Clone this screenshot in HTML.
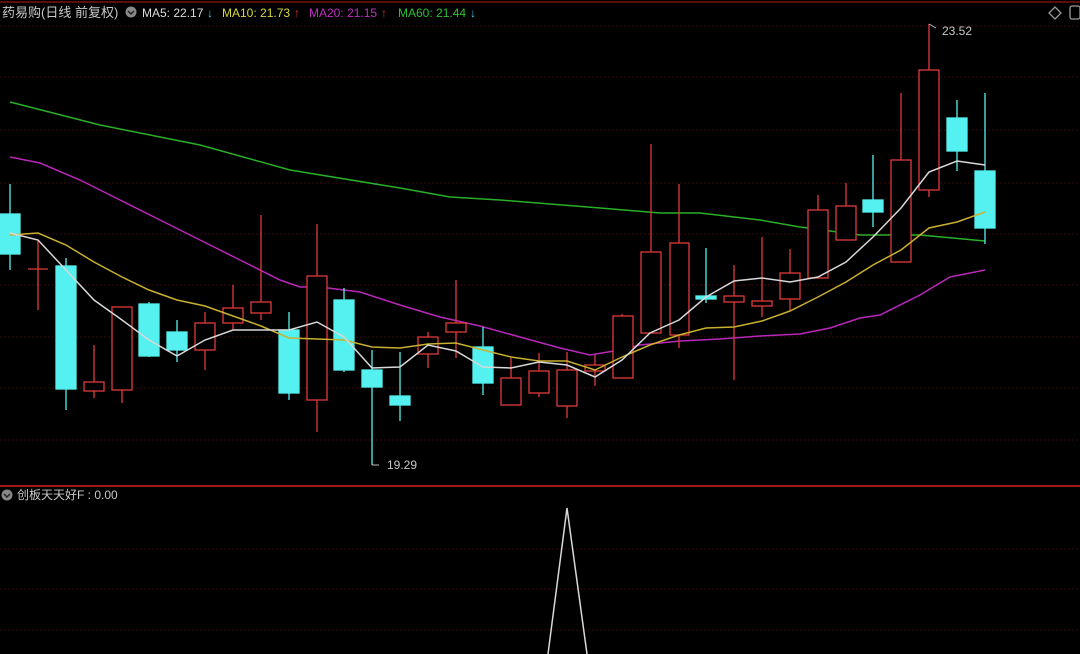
<!DOCTYPE html>
<html><head><meta charset="utf-8"><style>
html,body{margin:0;padding:0;background:#000;width:1080px;height:654px;overflow:hidden}
svg{display:block}
text{font-family:"Liberation Sans","Noto Sans CJK SC",sans-serif}
</style></head><body>
<svg width="1080" height="654" viewBox="0 0 1080 654" xmlns="http://www.w3.org/2000/svg">
<rect width="1080" height="654" fill="#000"/>
<line x1="0" y1="2" x2="1080" y2="2" stroke="#5a0d0d" stroke-width="2"/>
<g stroke="#3a0a0a" stroke-width="1" stroke-dasharray="2,2">
<line x1="0" y1="26" x2="1080" y2="26"/><line x1="0" y1="77" x2="1080" y2="77"/><line x1="0" y1="130" x2="1080" y2="130"/><line x1="0" y1="183" x2="1080" y2="183"/><line x1="0" y1="234" x2="1080" y2="234"/><line x1="0" y1="285" x2="1080" y2="285"/><line x1="0" y1="337" x2="1080" y2="337"/><line x1="0" y1="388" x2="1080" y2="388"/><line x1="0" y1="440" x2="1080" y2="440"/>
<line x1="0" y1="549" x2="1080" y2="549"/><line x1="0" y1="589" x2="1080" y2="589"/><line x1="0" y1="630" x2="1080" y2="630"/>
</g>
<line x1="0" y1="486" x2="1080" y2="486" stroke="#a01818" stroke-width="2"/>
<!-- header -->
<text x="2" y="17" font-size="13" fill="#c8c8c8">药易购(日线 前复权)</text>
<circle cx="131" cy="12" r="5.5" fill="#888"/><path d="M128 11l3 3 3-3" stroke="#222" stroke-width="1.5" fill="none"/>
<text x="142" y="17" font-size="12" fill="#dcdcdc">MA5: 22.17</text><text x="207" y="17" font-size="12" fill="#4ad0e0">↓</text>
<text x="222" y="17" font-size="12" fill="#d8d840">MA10: 21.73</text><text x="294" y="17" font-size="12" fill="#e03030">↑</text>
<text x="309" y="17" font-size="12" fill="#c030c0">MA20: 21.15</text><text x="381" y="17" font-size="12" fill="#e03030">↑</text>
<text x="398" y="17" font-size="12" fill="#30c030">MA60: 21.44</text><text x="470" y="17" font-size="12" fill="#4ad0e0">↓</text>
<path d="M1055 7l6 6-6 6-6-6z" stroke="#999" fill="none" stroke-width="1.3"/>
<rect x="1070" y="6" width="10" height="13" rx="2" stroke="#999" fill="none" stroke-width="1.3"/>
<!-- MA lines -->
<polyline fill="none" stroke="#28b028" stroke-width="1.5" points="10,102 100,125 200,145 290,170 400,188 450,197 500,200 600,208 660,213 700,213 760,220 800,227 860,235 920,235 985,241"/>
<polyline fill="none" stroke="#b828b8" stroke-width="1.5" points="10,157 40,163 80,180 120,200 160,220 200,240 240,260 280,280 300,287 320,287 360,292 400,305 440,317 480,326 520,337 560,348 590,355 620,350 640,345 680,341 720,339 760,336 800,334 830,328 860,318 880,315 920,295 950,277 985,270"/>
<!-- candles -->
<g stroke-width="1.3">
<g stroke="#e03a3a" fill="none">
<line x1="38" y1="240" x2="38" y2="310"/><line x1="28" y1="269" x2="48" y2="269"/>
<line x1="94" y1="345" x2="94" y2="398"/><rect x="84" y="382" width="20" height="9" fill="#000"/>
<line x1="122" y1="307" x2="122" y2="403"/><rect x="112" y="307" width="20" height="83" fill="#000"/>
<line x1="205" y1="312" x2="205" y2="370"/><rect x="195" y="323" width="20" height="27" fill="#000"/>
<line x1="233" y1="285" x2="233" y2="330"/><rect x="223" y="308" width="20" height="15" fill="#000"/>
<line x1="261" y1="215" x2="261" y2="320"/><rect x="251" y="302" width="20" height="11" fill="#000"/>
<line x1="317" y1="224" x2="317" y2="432"/><rect x="307" y="276" width="20" height="124" fill="#000"/>
<line x1="428" y1="332" x2="428" y2="368"/><rect x="418" y="337" width="20" height="17" fill="#000"/>
<line x1="456" y1="280" x2="456" y2="358"/><rect x="446" y="323" width="20" height="9" fill="#000"/>
<line x1="511" y1="358" x2="511" y2="405"/><rect x="501" y="378" width="20" height="27" fill="#000"/>
<line x1="539" y1="353" x2="539" y2="397"/><rect x="529" y="371" width="20" height="22" fill="#000"/>
<line x1="567" y1="352" x2="567" y2="418"/><rect x="557" y="370" width="20" height="36" fill="#000"/>
<line x1="595" y1="355" x2="595" y2="386"/><rect x="585" y="365" width="20" height="6" fill="#000"/>
<line x1="622" y1="314" x2="622" y2="378"/><rect x="613" y="316" width="20" height="62" fill="#000"/>
<line x1="651" y1="144" x2="651" y2="333"/><rect x="641" y="252" width="20" height="81" fill="#000"/>
<line x1="679" y1="184" x2="679" y2="348"/><rect x="670" y="243" width="19" height="92" fill="#000"/>
<line x1="734" y1="265" x2="734" y2="380"/><rect x="724" y="296" width="20" height="6" fill="#000"/>
<line x1="762" y1="237" x2="762" y2="317"/><rect x="752" y="301" width="20" height="5" fill="#000"/>
<line x1="790" y1="249" x2="790" y2="310"/><rect x="780" y="273" width="20" height="26" fill="#000"/>
<line x1="818" y1="195" x2="818" y2="278"/><rect x="808" y="210" width="20" height="68" fill="#000"/>
<line x1="846" y1="183" x2="846" y2="240"/><rect x="836" y="206" width="20" height="34" fill="#000"/>
<line x1="901" y1="93" x2="901" y2="262"/><rect x="891" y="160" width="20" height="102" fill="#000"/>
<line x1="929" y1="24" x2="929" y2="197"/><rect x="919" y="70" width="20" height="120" fill="#000"/>
</g>
<g stroke="#55f0f0" fill="#55f0f0">
<line x1="10" y1="184" x2="10" y2="270"/><rect x="0" y="214" width="20" height="40"/>
<line x1="66" y1="258" x2="66" y2="410"/><rect x="56" y="266" width="20" height="123"/>
<line x1="149" y1="302" x2="149" y2="357"/><rect x="139" y="304" width="20" height="52"/>
<line x1="177" y1="320" x2="177" y2="362"/><rect x="167" y="332" width="20" height="18"/>
<line x1="289" y1="312" x2="289" y2="400"/><rect x="279" y="330" width="20" height="63"/>
<line x1="344" y1="288" x2="344" y2="372"/><rect x="334" y="300" width="20" height="70"/>
<line x1="372" y1="350" x2="372" y2="465"/><rect x="362" y="370" width="20" height="17"/>
<line x1="400" y1="352" x2="400" y2="421"/><rect x="390" y="396" width="20" height="9"/>
<line x1="483" y1="327" x2="483" y2="395"/><rect x="473" y="347" width="20" height="36"/>
<line x1="706" y1="248" x2="706" y2="303"/><rect x="696" y="296" width="20" height="3"/>
<line x1="873" y1="155" x2="873" y2="227"/><rect x="863" y="200" width="20" height="12"/>
<line x1="957" y1="100" x2="957" y2="171"/><rect x="947" y="118" width="20" height="33"/>
<line x1="985" y1="93" x2="985" y2="244"/><rect x="975" y="171" width="20" height="57"/>
</g>
</g>
<polyline fill="none" stroke="#c8b030" stroke-width="1.5" points="10,235 38,233 66,245 94,262 122,277 149,290 177,300 205,306 233,316 261,326 289,338 317,339 344,340 372,347 400,348 428,344 456,343 483,350 511,357 539,361 567,361 595,370 622,357 650,345 679,335 706,328 734,327 762,321 790,311 818,297 846,282 873,265 901,250 929,228 957,222 985,212"/>
<polyline fill="none" stroke="#d8d8d8" stroke-width="1.5" points="10,233 38,240 66,270 94,300 122,320 149,340 177,356 205,340 233,330 261,330 289,330 317,322 344,337 372,368 400,367 428,345 456,351 483,367 511,368 539,362 567,365 595,377 622,360 650,333 679,320 706,297 734,281 762,278 790,282 818,277 846,262 873,237 901,208 929,172 957,161 985,165"/>
<!-- labels -->
<path d="M929 24 L936 28" stroke="#bbb" fill="none"/><text x="942" y="35" font-size="12" fill="#c8c8c8">23.52</text>
<path d="M372 465 L379 465" stroke="#bbb"/><text x="387" y="469" font-size="12" fill="#c8c8c8">19.29</text>
<!-- indicator -->
<circle cx="7" cy="495" r="5.5" fill="#888"/><path d="M4 494l3 3 3-3" stroke="#222" stroke-width="1.5" fill="none"/>
<text x="17" y="499" font-size="12" fill="#c8c8c8">创板天天好F : 0.00</text>
<polyline fill="none" stroke="#d8d8d8" stroke-width="1.5" points="548,654 567,508 587,654"/>
</svg>
</body></html>
